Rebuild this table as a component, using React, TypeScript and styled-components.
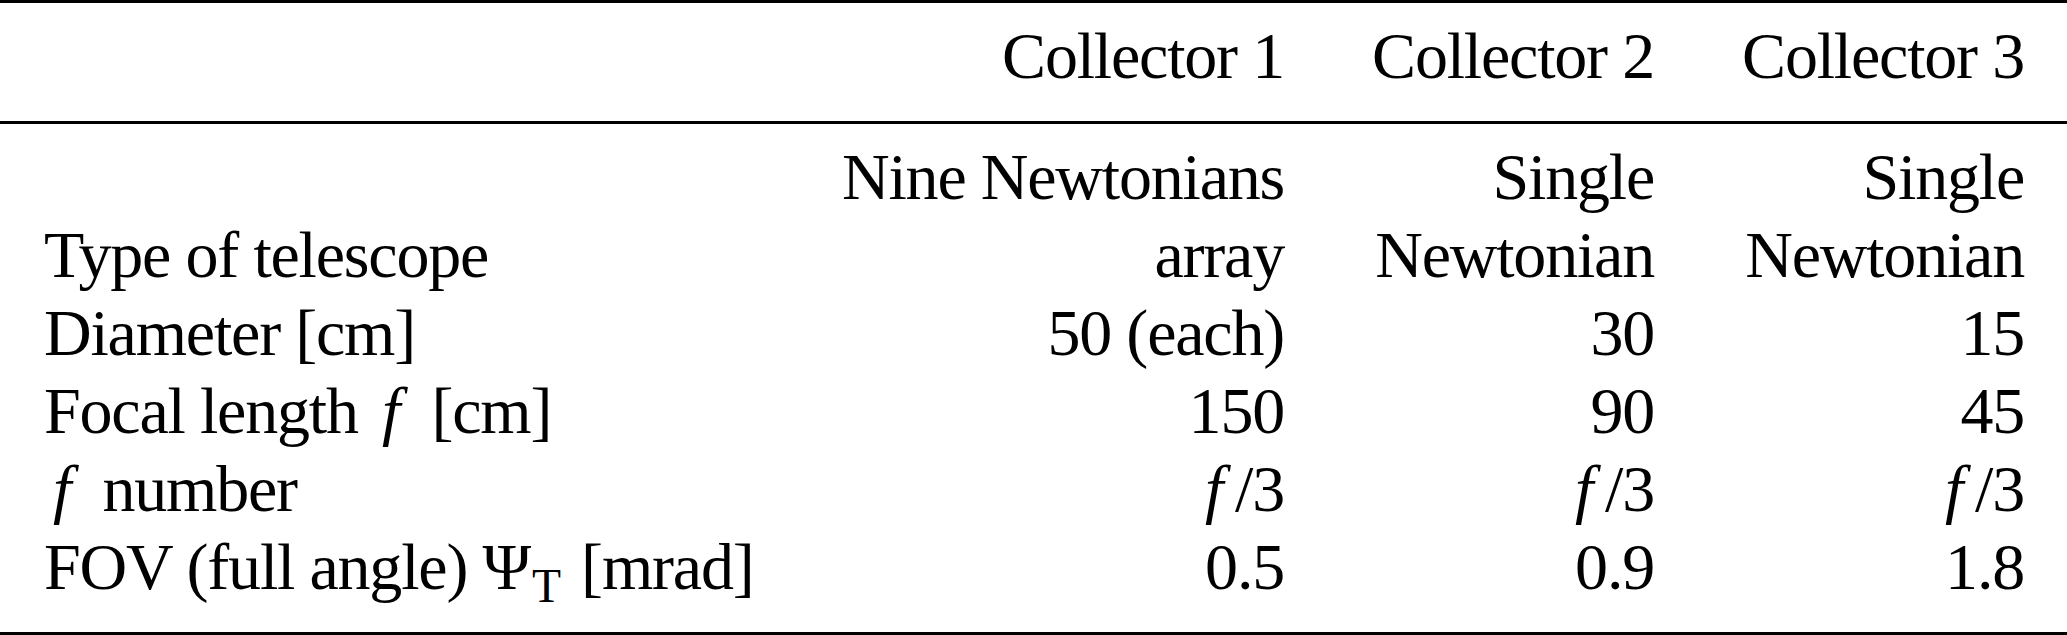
import React from 'react';
import styled, {createGlobalStyle} from 'styled-components';

const GlobalStyle = createGlobalStyle`
  html, body {
    margin: 0;
    padding: 0;
    background: #ffffff;
  }
  body {
    font-family: 'Liberation Serif', 'Times New Roman', serif;
    color: #000000;
  }
`;

const Table = styled.table`
  width: 2067px;
  table-layout: fixed;
  border-collapse: collapse;
  font-size: 66px;
  line-height: 78px;
  letter-spacing: -1.2px;
  border-top: 3px solid #000;
  border-bottom: 3px solid #000;
`;

const Col = styled.col<{$w: number}>`
  width: ${p => p.$w}px;
`;

const HeadCell = styled.th<{$first?: boolean}>`
  font-weight: normal;
  text-align: ${p => (p.$first ? 'left' : 'right')};
  padding: 14px 43px 26px 44px;
  border-bottom: 3px solid #000;
  white-space: nowrap;
`;

const Cell = styled.td<{$first?: boolean; $top?: boolean; $last?: boolean}>`
  text-align: ${p => (p.$first ? 'left' : 'right')};
  vertical-align: bottom;
  white-space: nowrap;
  padding: ${p => (p.$top ? '14px' : '0')} 43px ${p => (p.$last ? '26px' : '0')} 44px;
`;

// math italic f, with the extra room TeX gives it
const Mi = styled.i<{$frac?: boolean}>`
  font-style: italic;
  margin: ${p => (p.$frac ? '0 13px 0 0' : '0 17px 0 9px')};
`;

const Sub = styled.sub`
  font-size: 0.72em;
  line-height: 0;
  vertical-align: -0.28em;
  margin: 0 6px 0 2px;
`;

const cols = [798, 529, 370, 370];

const fNum = (
  <>
    <Mi $frac>f</Mi>/3
  </>
);

const rows: React.ReactNode[][] = [
  [
    'Type of telescope',
    <>Nine Newtonians<br />array</>,
    <>Single<br />Newtonian</>,
    <>Single<br />Newtonian</>,
  ],
  ['Diameter [cm]', '50 (each)', '30', '15'],
  [<>Focal length <Mi>f</Mi> [cm]</>, '150', '90', '45'],
  [<><Mi>f</Mi> number</>, fNum, fNum, fNum],
  [<>FOV (full angle) Ψ<Sub>T</Sub> [mrad]</>, '0.5', '0.9', '1.8'],
];

const App = () => {
  return (
    <>
      <GlobalStyle />
      <Table>
        <colgroup>
          {cols.map((w, i) => (
            <Col key={i} $w={w} />
          ))}
        </colgroup>
        <thead>
          <tr>
            <HeadCell $first />
            <HeadCell>Collector 1</HeadCell>
            <HeadCell>Collector 2</HeadCell>
            <HeadCell>Collector 3</HeadCell>
          </tr>
        </thead>
        <tbody>
          {rows.map((r, i) => (
            <tr key={i}>
              {r.map((c, j) => (
                <Cell key={j} $first={j === 0} $top={i === 0} $last={i === rows.length - 1}>
                  {c}
                </Cell>
              ))}
            </tr>
          ))}
        </tbody>
      </Table>
    </>
  );
};

export default App;
